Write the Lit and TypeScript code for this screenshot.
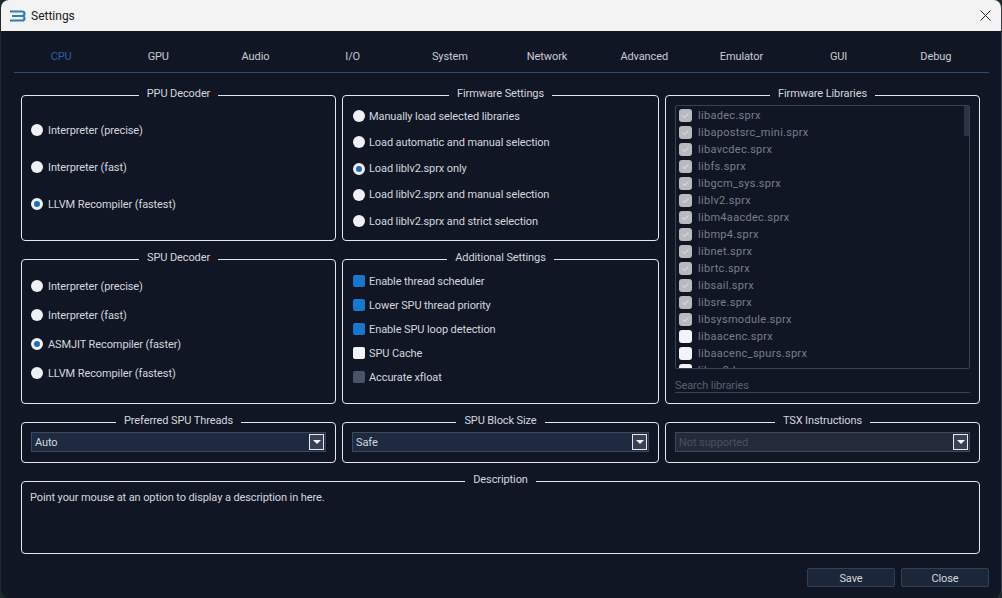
import { LitElement, html, css, svg } from "lit";
import { customElement } from "lit/decorators.js";

const TABS = ["CPU", "GPU", "Audio", "I/O", "System", "Network", "Advanced", "Emulator", "GUI", "Debug"];
const LIBS: [string, boolean][] = [
  ["libadec.sprx", true], ["libapostsrc_mini.sprx", true], ["libavcdec.sprx", true], ["libfs.sprx", true],
  ["libgcm_sys.sprx", true], ["liblv2.sprx", true], ["libm4aacdec.sprx", true], ["libmp4.sprx", true],
  ["libnet.sprx", true], ["librtc.sprx", true], ["libsail.sprx", true], ["libsre.sprx", true],
  ["libsysmodule.sprx", true], ["libaacenc.sprx", false], ["libaacenc_spurs.sprx", false], ["libac3dec.sprx", false],
];

@customElement("app-root")
export class AppRoot extends LitElement {
  static styles = css`
    :host { display: block; width: 1002px; height: 598px; background: #1d2a2a; font-family: "Roboto", sans-serif; font-size: 11px; letter-spacing: -0.1px; color: #d4d7dd; overflow: hidden; }
    .win { width: 1001px; height: 598px; margin-left: 1px; background: #111625; border-radius: 8px; overflow: hidden; display: flex; flex-direction: column; border-right: 1px solid #3a3f48; box-sizing: border-box; }
    .title { height: 31px; background: #f3f3f3; color: #1a1a1a; display: flex; align-items: center; padding-left: 8px; gap: 5px; font-size: 12px; letter-spacing: 0; flex: none; }
    .title .x { margin-left: auto; margin-right: 10px; display: flex; }
    .content { padding: 0 12px 0 13px; display: flex; flex-direction: column; flex: 1; }
    .tabs { display: grid; grid-template-columns: repeat(10, 97.2px); height: 41px; border-bottom: 1px solid #2a4a80; align-items: start; flex: none; width: 975px; }
    .tab { text-align: center; color: #c9ccd3; line-height: 16px; padding: 18px 3px 0 0; box-sizing: border-box; }
    .tab.on { color: #2a5fa8; }
    .grid { margin: 22px 0 0 7px; display: grid; grid-template-columns: 315px 317px 315px; column-gap: 6px; grid-template-rows: 146px 163px 59px 91px; width: 959px; }
    .g { position: relative; border: 1px solid #e4e7ec; border-radius: 4px; box-sizing: border-box; display: flex; flex-direction: column; }
    .lg { position: absolute; top: -10px; left: 0; right: 0; display: flex; justify-content: center; pointer-events: none; line-height: 16px; }
    .lg span { background: #111625; padding: 0 8px; color: #d4d7dd; }
    .spaced { margin-top: 18px; }
    .wide { grid-column: 1 / 4; }
    .libs { grid-column: 3; grid-row: 1 / 3; }
    .opts { display: flex; flex-direction: column; padding-left: 9px; }
    .row { display: flex; align-items: center; height: 16px; gap: 5px; white-space: nowrap; }
    .rd { width: 12px; height: 12px; border-radius: 50%; background: #eef0f6; box-sizing: border-box; flex: none; }
    .rd.on { background: #1a6fb8; border: 3px solid #eef0f6; }
    .cb { width: 12px; height: 12px; border-radius: 2px; background: #f2f4fa; flex: none; }
    .cb.on { background: #1777cf; }
    .cb.dis { background: #4a5468; }
    .ppu { padding-top: 26px; gap: 21px; }
    .spu { padding-top: 18px; gap: 13px; }
    .fw { padding-top: 12px; gap: 10.3px; padding-left: 10px; }
    .add { padding-top: 13px; gap: 8px; padding-left: 10px; }
    .fw .row, .add .row { gap: 4px; }
    .list { margin: 9px 9px 0 9px; height: 264px; border: 1px solid #3a4256; box-sizing: border-box; overflow: hidden; position: relative; padding: 1px 0 0 3px; border-radius: 2px; letter-spacing: 0.3px; }
    .li { display: flex; align-items: center; height: 17px; gap: 6px; color: #7a7e88; white-space: nowrap; }
    .lb { width: 13px; height: 13px; border-radius: 3px; background: #f2f4fa; flex: none; display: flex; align-items: center; justify-content: center; }
    .lb.on { background: #b8bac0; }
    .sb { position: absolute; top: 0; right: 0; width: 5px; height: 30px; background: #2c3244; }
    .search { margin: 7px 9px 0 9px; border-bottom: 1px solid #3a4256; color: #5b606c; height: 16px; line-height: 20px; }
    .combo { margin: 9px 9px 0 9px; height: 20px; background: #1e2a40; border: 1px solid #3c4a60; box-sizing: border-box; display: flex; align-items: center; padding-left: 3px; justify-content: space-between; }
    .combo.dis { background: #252a3b; color: #4b505e; }
    .arrow { width: 15px; height: 16px; box-sizing: border-box; border: 1px solid #e8eaf0; background: #3a4152; display: flex; align-items: center; justify-content: center; margin-right: 1px; }
    .arrow i { width: 0; height: 0; border-left: 4px solid transparent; border-right: 4px solid transparent; border-top: 4px solid #f4f5f8; }
    .desc { padding: 9px 8px 8px; }
    .footer { display: flex; justify-content: flex-end; gap: 6px; margin-top: 14px; width: 975px; }
    .btn { width: 88px; height: 19px; box-sizing: border-box; background: #1b2638; border: 1px solid #33405a; border-radius: 2px; color: #d4d7dd; display: flex; align-items: center; justify-content: center; padding-top: 1px; }
  `;

  private group(title: string, body: unknown, cls = "") {
    return html`<div class="g ${cls}"><div class="lg"><span>${title}</span></div>${body}</div>`;
  }
  private radios(items: string[], on: number) {
    return items.map((t, i) => html`<div class="row"><div class="rd ${i === on ? "on" : ""}"></div>${t}</div>`);
  }
  private combo(t: string, dis = false) {
    return html`<div class="combo ${dis ? "dis" : ""}"><span>${t}</span><div class="arrow"><i></i></div></div>`;
  }

  render() {
    const check = svg`<path d="M3.5 6.5 L5.5 8.5 L9.5 4.5" fill="none" stroke="#d4d6da" stroke-width="1.2"/>`;
    return html`<div class="win">
      <div class="title">
        <svg width="17" height="12" viewBox="0 0 17 12"><path d="M1 1.5 H13 Q15.5 1.5 15.5 3.5 Q15.5 6 13 6 H3 M13 6 Q15.5 6 15.5 8.5 Q15.5 10.5 13 10.5 H1" fill="none" stroke="#2f7fb0" stroke-width="2.2"/></svg>
        <span>Settings</span>
        <span class="x"><svg width="11" height="11" viewBox="0 0 11 11"><path d="M0.5 0.5 L10.5 10.5 M10.5 0.5 L0.5 10.5" stroke="#222" stroke-width="1"/></svg></span>
      </div>
      <div class="content">
        <div class="tabs">${TABS.map((t, i) => html`<div class="tab ${i === 0 ? "on" : ""}">${t}</div>`)}</div>
        <div class="grid">
          ${this.group("PPU Decoder", html`<div class="opts ppu">${this.radios(["Interpreter (precise)", "Interpreter (fast)", "LLVM Recompiler (fastest)"], 2)}</div>`)}
          ${this.group("Firmware Settings", html`<div class="opts fw">${this.radios(["Manually load selected libraries", "Load automatic and manual selection", "Load liblv2.sprx only", "Load liblv2.sprx and manual selection", "Load liblv2.sprx and strict selection"], 2)}</div>`)}
          ${this.group("Firmware Libraries", html`
            <div class="list">
              ${LIBS.map(([n, c]) => html`<div class="li"><div class="lb ${c ? "on" : ""}">${c ? html`<svg width="13" height="13" viewBox="0 0 13 13">${check}</svg>` : ""}</div>${n}</div>`)}
              <div class="sb"></div>
            </div>
            <div class="search">Search libraries</div>`, "libs")}
          ${this.group("SPU Decoder", html`<div class="opts spu">${this.radios(["Interpreter (precise)", "Interpreter (fast)", "ASMJIT Recompiler (faster)", "LLVM Recompiler (fastest)"], 2)}</div>`, "spaced")}
          ${this.group("Additional Settings", html`<div class="opts add">
            <div class="row"><div class="cb on"></div>Enable thread scheduler</div>
            <div class="row"><div class="cb on"></div>Lower SPU thread priority</div>
            <div class="row"><div class="cb on"></div>Enable SPU loop detection</div>
            <div class="row"><div class="cb"></div>SPU Cache</div>
            <div class="row"><div class="cb dis"></div>Accurate xfloat</div>
          </div>`, "spaced")}
          ${this.group("Preferred SPU Threads", this.combo("Auto"), "spaced")}
          ${this.group("SPU Block Size", this.combo("Safe"), "spaced")}
          ${this.group("TSX Instructions", this.combo("Not supported", true), "spaced")}
          ${this.group("Description", html`<div class="desc">Point your mouse at an option to display a description in here.</div>`, "spaced wide")}
        </div>
        <div class="footer"><div class="btn">Save</div><div class="btn">Close</div></div>
      </div>
    </div>`;
  }
}
